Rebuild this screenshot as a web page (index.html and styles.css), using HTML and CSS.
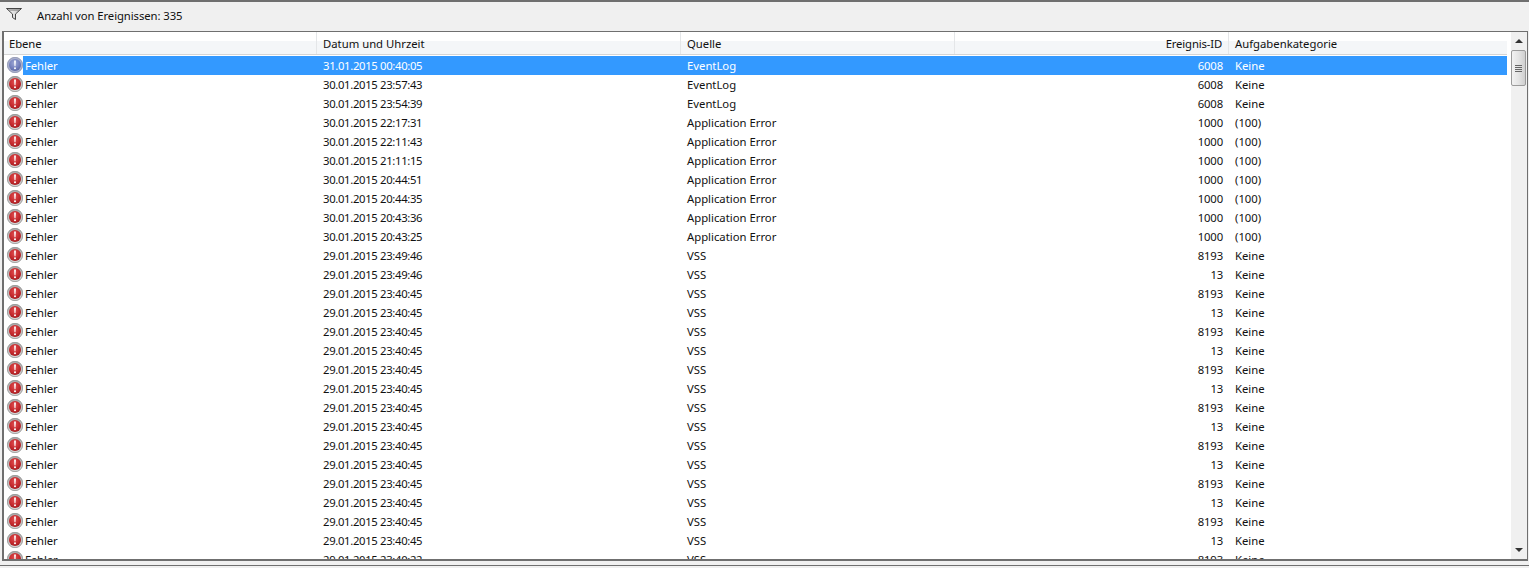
FILE: index.html
```html
<!DOCTYPE html>
<html lang="de">
<head>
<meta charset="utf-8">
<title>Ereignisanzeige</title>
<link rel="stylesheet" href="styles.css">
</head>
<body>
<svg class="defs" width="0" height="0">
<defs>
<radialGradient id="red" cx="45%" cy="35%" r="70%"><stop offset="0" stop-color="#e04c4e"/><stop offset=".6" stop-color="#c42a2e"/><stop offset="1" stop-color="#9e1a1e"/></radialGradient>
<radialGradient id="blue" cx="45%" cy="35%" r="70%"><stop offset="0" stop-color="#9ea8d4"/><stop offset=".6" stop-color="#7480bd"/><stop offset="1" stop-color="#5a659f"/></radialGradient>
<linearGradient id="ring" x1="0" y1="0" x2="0" y2="1"><stop offset="0" stop-color="#a8a8a8"/><stop offset="1" stop-color="#d8d8d8"/></linearGradient>
<symbol id="err" viewBox="0 0 16 16"><circle cx="8" cy="8" r="7.700" fill="url(#ring)" stroke="#858585" stroke-width=".7"/><circle cx="8" cy="8" r="6" fill="url(#red)"/><path d="M7.100 3.500h1.800l-.4 5.700h-1z" fill="#fff"/><circle cx="8" cy="11.200" r="1" fill="#fff"/></symbol>
<symbol id="inf" viewBox="0 0 16 16"><circle cx="8" cy="8" r="7.700" fill="#aab0cc" stroke="#8087a8" stroke-width=".7"/><circle cx="8" cy="8" r="6" fill="url(#blue)"/><path d="M7.100 3.500h1.800l-.4 5.700h-1z" fill="#fff"/><circle cx="8" cy="11.200" r="1" fill="#fff"/></symbol>
<linearGradient id="fn" x1="0" y1="0" x2="1" y2="0"><stop offset="0" stop-color="#fafafa"/><stop offset="1" stop-color="#c4c4c4"/></linearGradient>
</defs>
</svg>
<div class="window">
<div class="toolbar">
<svg class="funnel" width="16" height="12" viewBox="0 0 16 12"><path d="M.500.500h15L9.500 6v5.500L6.500 9.500V6z" fill="url(#fn)" stroke="#333" stroke-width=".9"/><path d="M2 2h12" stroke="#777"/></svg>
<span>Anzahl von Ereignissen: 335</span>
</div>
<div class="frame">
<div class="list">
<div class="row head"><div class="c lvl">Ebene</div><div class="c">Datum und Uhrzeit</div><div class="c">Quelle</div><div class="c blank"></div><div class="c num">Ereignis-ID</div><div class="c">Aufgabenkategorie</div></div>
<div class="body">
<div class="row sel"><svg class="ico"><use href="#inf"/></svg><div class="c lvl">Fehler</div><div class="c date">31.01.2015 00:40:05</div><div class="c">EventLog</div><div class="c blank"></div><div class="c num">6008</div><div class="c">Keine</div></div>
<div class="row"><svg class="ico"><use href="#err"/></svg><div class="c lvl">Fehler</div><div class="c date">30.01.2015 23:57:43</div><div class="c">EventLog</div><div class="c blank"></div><div class="c num">6008</div><div class="c">Keine</div></div>
<div class="row"><svg class="ico"><use href="#err"/></svg><div class="c lvl">Fehler</div><div class="c date">30.01.2015 23:54:39</div><div class="c">EventLog</div><div class="c blank"></div><div class="c num">6008</div><div class="c">Keine</div></div>
<div class="row"><svg class="ico"><use href="#err"/></svg><div class="c lvl">Fehler</div><div class="c date">30.01.2015 22:17:31</div><div class="c">Application Error</div><div class="c blank"></div><div class="c num">1000</div><div class="c">(100)</div></div>
<div class="row"><svg class="ico"><use href="#err"/></svg><div class="c lvl">Fehler</div><div class="c date">30.01.2015 22:11:43</div><div class="c">Application Error</div><div class="c blank"></div><div class="c num">1000</div><div class="c">(100)</div></div>
<div class="row"><svg class="ico"><use href="#err"/></svg><div class="c lvl">Fehler</div><div class="c date">30.01.2015 21:11:15</div><div class="c">Application Error</div><div class="c blank"></div><div class="c num">1000</div><div class="c">(100)</div></div>
<div class="row"><svg class="ico"><use href="#err"/></svg><div class="c lvl">Fehler</div><div class="c date">30.01.2015 20:44:51</div><div class="c">Application Error</div><div class="c blank"></div><div class="c num">1000</div><div class="c">(100)</div></div>
<div class="row"><svg class="ico"><use href="#err"/></svg><div class="c lvl">Fehler</div><div class="c date">30.01.2015 20:44:35</div><div class="c">Application Error</div><div class="c blank"></div><div class="c num">1000</div><div class="c">(100)</div></div>
<div class="row"><svg class="ico"><use href="#err"/></svg><div class="c lvl">Fehler</div><div class="c date">30.01.2015 20:43:36</div><div class="c">Application Error</div><div class="c blank"></div><div class="c num">1000</div><div class="c">(100)</div></div>
<div class="row"><svg class="ico"><use href="#err"/></svg><div class="c lvl">Fehler</div><div class="c date">30.01.2015 20:43:25</div><div class="c">Application Error</div><div class="c blank"></div><div class="c num">1000</div><div class="c">(100)</div></div>
<div class="row"><svg class="ico"><use href="#err"/></svg><div class="c lvl">Fehler</div><div class="c date">29.01.2015 23:49:46</div><div class="c">VSS</div><div class="c blank"></div><div class="c num">8193</div><div class="c">Keine</div></div>
<div class="row"><svg class="ico"><use href="#err"/></svg><div class="c lvl">Fehler</div><div class="c date">29.01.2015 23:49:46</div><div class="c">VSS</div><div class="c blank"></div><div class="c num">13</div><div class="c">Keine</div></div>
<div class="row"><svg class="ico"><use href="#err"/></svg><div class="c lvl">Fehler</div><div class="c date">29.01.2015 23:40:45</div><div class="c">VSS</div><div class="c blank"></div><div class="c num">8193</div><div class="c">Keine</div></div>
<div class="row"><svg class="ico"><use href="#err"/></svg><div class="c lvl">Fehler</div><div class="c date">29.01.2015 23:40:45</div><div class="c">VSS</div><div class="c blank"></div><div class="c num">13</div><div class="c">Keine</div></div>
<div class="row"><svg class="ico"><use href="#err"/></svg><div class="c lvl">Fehler</div><div class="c date">29.01.2015 23:40:45</div><div class="c">VSS</div><div class="c blank"></div><div class="c num">8193</div><div class="c">Keine</div></div>
<div class="row"><svg class="ico"><use href="#err"/></svg><div class="c lvl">Fehler</div><div class="c date">29.01.2015 23:40:45</div><div class="c">VSS</div><div class="c blank"></div><div class="c num">13</div><div class="c">Keine</div></div>
<div class="row"><svg class="ico"><use href="#err"/></svg><div class="c lvl">Fehler</div><div class="c date">29.01.2015 23:40:45</div><div class="c">VSS</div><div class="c blank"></div><div class="c num">8193</div><div class="c">Keine</div></div>
<div class="row"><svg class="ico"><use href="#err"/></svg><div class="c lvl">Fehler</div><div class="c date">29.01.2015 23:40:45</div><div class="c">VSS</div><div class="c blank"></div><div class="c num">13</div><div class="c">Keine</div></div>
<div class="row"><svg class="ico"><use href="#err"/></svg><div class="c lvl">Fehler</div><div class="c date">29.01.2015 23:40:45</div><div class="c">VSS</div><div class="c blank"></div><div class="c num">8193</div><div class="c">Keine</div></div>
<div class="row"><svg class="ico"><use href="#err"/></svg><div class="c lvl">Fehler</div><div class="c date">29.01.2015 23:40:45</div><div class="c">VSS</div><div class="c blank"></div><div class="c num">13</div><div class="c">Keine</div></div>
<div class="row"><svg class="ico"><use href="#err"/></svg><div class="c lvl">Fehler</div><div class="c date">29.01.2015 23:40:45</div><div class="c">VSS</div><div class="c blank"></div><div class="c num">8193</div><div class="c">Keine</div></div>
<div class="row"><svg class="ico"><use href="#err"/></svg><div class="c lvl">Fehler</div><div class="c date">29.01.2015 23:40:45</div><div class="c">VSS</div><div class="c blank"></div><div class="c num">13</div><div class="c">Keine</div></div>
<div class="row"><svg class="ico"><use href="#err"/></svg><div class="c lvl">Fehler</div><div class="c date">29.01.2015 23:40:45</div><div class="c">VSS</div><div class="c blank"></div><div class="c num">8193</div><div class="c">Keine</div></div>
<div class="row"><svg class="ico"><use href="#err"/></svg><div class="c lvl">Fehler</div><div class="c date">29.01.2015 23:40:45</div><div class="c">VSS</div><div class="c blank"></div><div class="c num">13</div><div class="c">Keine</div></div>
<div class="row"><svg class="ico"><use href="#err"/></svg><div class="c lvl">Fehler</div><div class="c date">29.01.2015 23:40:45</div><div class="c">VSS</div><div class="c blank"></div><div class="c num">8193</div><div class="c">Keine</div></div>
<div class="row"><svg class="ico"><use href="#err"/></svg><div class="c lvl">Fehler</div><div class="c date">29.01.2015 23:40:45</div><div class="c">VSS</div><div class="c blank"></div><div class="c num">13</div><div class="c">Keine</div></div>
<div class="row"><svg class="ico"><use href="#err"/></svg><div class="c lvl">Fehler</div><div class="c date">29.01.2015 23:40:22</div><div class="c">VSS</div><div class="c blank"></div><div class="c num">8193</div><div class="c">Keine</div></div>
</div>
</div>
<div class="scrollbar">
<div class="arrow up"></div>
<div class="thumb"><i></i><i></i><i></i><i></i></div>
<div class="track"></div>
<div class="arrow down"></div>
</div>
</div>
<div class="footer"></div>
</div>
</body>
</html>
```
FILE: styles.css
```css
* { box-sizing: border-box; }
html, body { margin: 0; height: 100%; overflow: hidden; background: #fff; }
body { font: 11.3px/19px "Noto Sans", "Open Sans", sans-serif; color: #111; }
.defs { display: block; height: 0; }
.window { width: 1529px; height: 568px; background: #f0f0f0; display: flex; flex-direction: column; }
.toolbar { height: 31px; flex: none; border-top: 2px solid #6f6f6f; display: flex; align-items: center; padding: 0 0 2px 6px; gap: 15px; }
.funnel { flex: none; margin-top: -4px; }
.toolbar span { letter-spacing: -.08px; }
.frame { height: 530px; flex: none; margin: 0 1px 0 2px; border: 1px solid #6f6f6f; border-bottom-width: 2px; border-left-width: 2px; background: #fff; display: flex; overflow: hidden; }
.list { width: 1503px; flex: none; overflow: hidden; }
.row { display: grid; grid-template-columns: 313px 364px 274px 120px 154px 1fr; height: 19px; position: relative; }
.c { padding-left: 6px; white-space: nowrap; overflow: hidden; }
.lvl { letter-spacing: -.1px; }
.date { letter-spacing: -.33px; }
.num { text-align: right; padding: 0 6px 0 0; letter-spacing: -.15px; }
.head { height: 23px; background: linear-gradient(#fff 0 40%, #f4f6f8 40% 100%); border-bottom: 1px solid #d5d5d5; line-height: 24px; }
.head .c { border-right: 1px solid #e4e6e8; }
.head .c:first-child { padding-left: 5px; }
.head .c.blank, .head .c:last-child { border-right: 0; }
.body { padding-top: 1px; height: 506px; overflow: hidden; }
.body .c.lvl { padding-left: 21px; }
.ico { width: 16px; height: 16px; position: absolute; left: 3px; top: 1px; z-index: 1; }
.sel { background: linear-gradient(90deg, #fff 0 19px, #3399ff 19px); color: #fff; }
.scrollbar { flex: 1; border-left: 4px solid #fff; background: #f0f0f0; display: flex; flex-direction: column; align-items: center; }
.arrow { flex: none; width: 16px; height: 18px; position: relative; }
.arrow::after { content: ""; position: absolute; left: 4px; border-left: 4px solid transparent; border-right: 4px solid transparent; }
.up::after { top: 7px; border-bottom: 4px solid #333; }
.down::after { top: 7px; border-top: 4px solid #333; }
.thumb { flex: none; width: 15px; height: 36px; margin-right: 1px; border: 1px solid #9a9a9a; border-radius: 2px; background: linear-gradient(90deg, #f2f2f2, #e4e4e4 50%, #cfcfcf); display: flex; flex-direction: column; justify-content: center; align-items: center; gap: 1px; }
.thumb i { display: block; width: 7px; height: 1px; background: #666; }
.track { flex: 1; }
.footer { height: 5px; flex: none; border-bottom: 1px solid #6f6f6f; }
```
